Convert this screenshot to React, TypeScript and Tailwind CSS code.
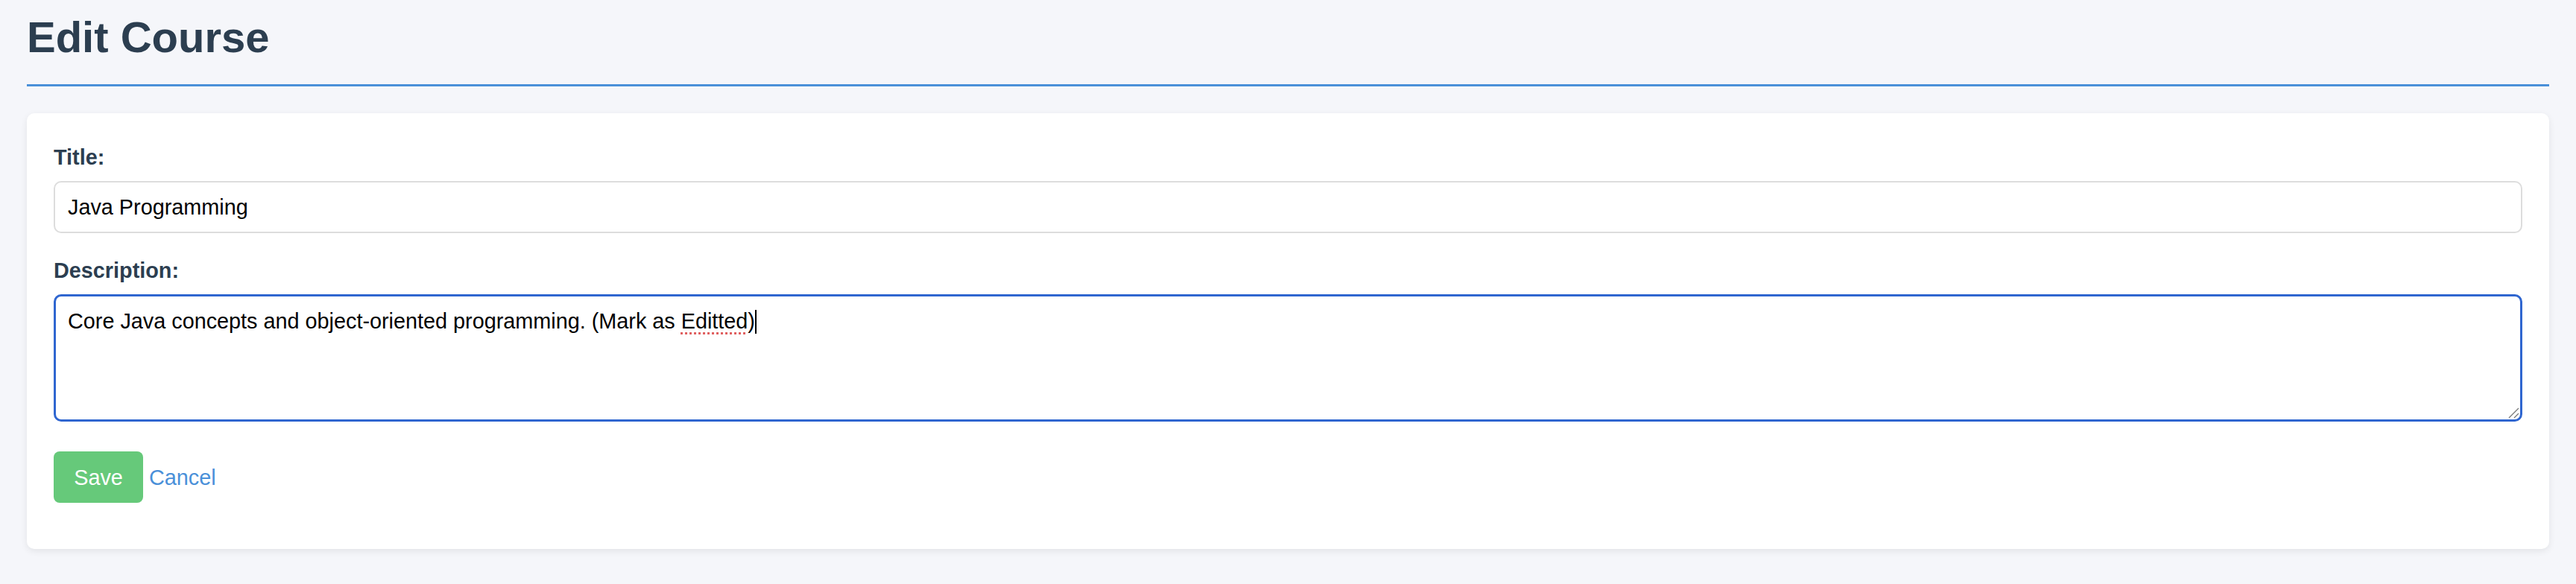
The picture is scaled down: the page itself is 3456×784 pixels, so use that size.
import React from "react";

export default function App() {
  return (
    <div className="min-h-screen bg-[#f5f6fa] px-[36px] font-['Liberation_Sans',Arial,Helvetica,sans-serif]">
      <h1 className="pt-[14px] pb-[27px] text-[58px] leading-[72px] font-bold text-[#2c3e50] border-b-[3px] border-[#4a90d9]">
        Edit Course
      </h1>
      <div className="mt-[36px] bg-white rounded-[10px] shadow-[0_3px_10px_rgba(0,0,0,0.08)] px-[36px] pt-[42px] pb-[62px]">
        <div className="text-[28.8px] leading-[34px] font-bold text-[#2c3e50] mb-[15px]">Title:</div>
        <div className="h-[70px] border-2 border-[#dddddd] rounded-[10px] px-[17px] flex items-center text-[28.8px] leading-[34px] text-black">
          Java Programming
        </div>
        <div className="mt-[33px] mb-[15px] text-[28.8px] leading-[34px] font-bold text-[#2c3e50]">Description:</div>
        <div className="relative h-[171px] border-[3px] border-[#2f66d0] rounded-[10px] pl-[16px] pt-[16px] text-[28.8px] leading-[34px] text-black">
          <span>Core Java concepts and object-oriented programming. (Mark as </span>
          <span className="underline decoration-dotted decoration-[#e06060] decoration-[3px] underline-offset-[5px]">Editted</span>
          <span>)</span>
          <span className="inline-block w-[2px] h-[32px] bg-black align-[-7px]" />
          <svg className="absolute right-[1px] bottom-[1px]" width="15" height="15" viewBox="0 0 15 15">
            <line x1="14" y1="1" x2="1" y2="14" stroke="#777" strokeWidth="1.3" />
            <line x1="14" y1="8" x2="8" y2="14" stroke="#777" strokeWidth="1.3" />
          </svg>
        </div>
        <div className="mt-[40px] flex items-center gap-[8px]">
          <button className="h-[69px] w-[120px] bg-[#66c97a] rounded-[8px] text-white text-[28.8px] leading-[34px]">
            Save
          </button>
          <a className="text-[#4a90d9] text-[28.8px] leading-[34px] cursor-pointer">Cancel</a>
        </div>
      </div>
    </div>
  );
}
